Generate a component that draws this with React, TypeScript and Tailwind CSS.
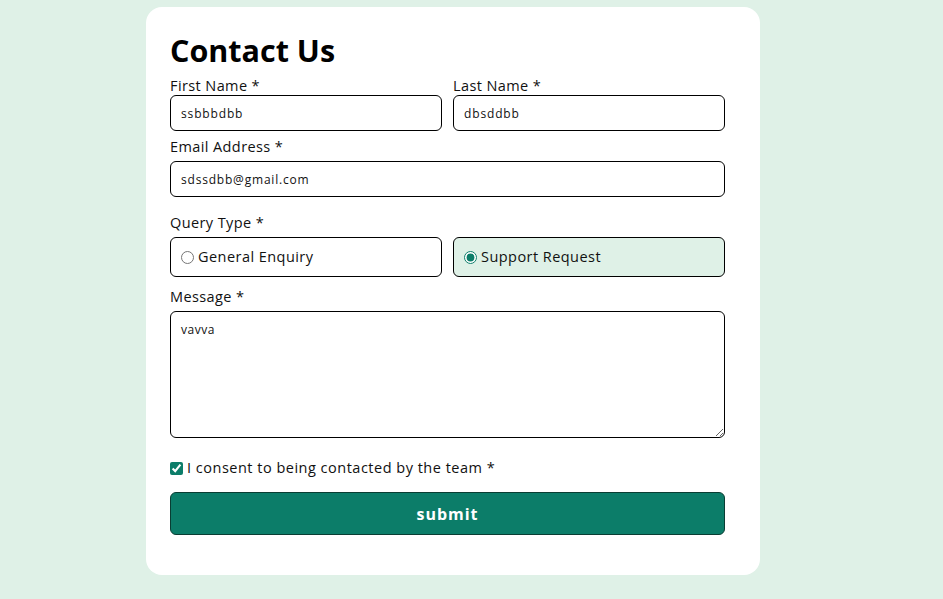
import { FC, useState } from "react";

const font = { fontFamily: "'Open Sans', 'Liberation Sans', sans-serif" };

const App: FC = () => {
  const [query, setQuery] = useState<"general" | "support">("support");
  const [consent, setConsent] = useState(true);

  return (
    <div className="min-h-[599px] bg-[#dff1e7] pt-[7px] pl-[146px] pb-6" style={font}>
      <form
        className="w-[614px] rounded-2xl bg-white pt-6 pl-6 pr-[35px] pb-10 text-[#111]"
        onSubmit={(e) => e.preventDefault()}
      >
        <h1 className="text-[30.5px] font-bold leading-[38px] text-black">Contact Us</h1>

        {/* Names */}
        <div className="mt-2 flex gap-[11px]">
          <div className="flex-1">
            <label className="block text-[14.5px] leading-[18px] tracking-[0.4px]">First Name *</label>
            <input
              defaultValue="ssbbbdbb"
              className="h-9 w-full rounded-md border border-black px-[10px] text-[12px] tracking-[0.85px] outline-none"
            />
          </div>
          <div className="flex-1">
            <label className="block text-[14.5px] leading-[18px] tracking-[0.4px]">Last Name *</label>
            <input
              defaultValue="dbsddbb"
              className="h-9 w-full rounded-md border border-black px-[10px] text-[12px] tracking-[0.85px] outline-none"
            />
          </div>
        </div>

        {/* Email */}
        <label className="mt-[7px] mb-[5px] block text-[14.5px] leading-[18px] tracking-[0.4px]">Email Address *</label>
        <input
          defaultValue="sdssdbb@gmail.com"
          className="h-9 w-full rounded-md border border-black px-[10px] text-[12px] tracking-[0.8px] outline-none"
        />

        {/* Query type */}
        <p className="mt-[17px] mb-[5px] text-[14.5px] leading-[18px] tracking-[0.4px]">Query Type *</p>
        <div className="flex gap-[11px]">
          <label
            className={`flex h-10 flex-1 items-center gap-[4px] rounded-md border border-black pl-[10px] text-[14.5px] tracking-[0.45px] ${
              query === "general" ? "bg-[#dff1e7]" : "bg-white"
            }`}
          >
            <input
              type="radio"
              name="query"
              checked={query === "general"}
              onChange={() => setQuery("general")}
              className="h-[13px] w-[13px] accent-[#0c7d69]"
            />
            General Enquiry
          </label>
          <label
            className={`flex h-10 flex-1 items-center gap-[4px] rounded-md border border-black pl-[10px] text-[14.5px] tracking-[0.45px] ${
              query === "support" ? "bg-[#dff1e7]" : "bg-white"
            }`}
          >
            <input
              type="radio"
              name="query"
              checked={query === "support"}
              onChange={() => setQuery("support")}
              className="h-[13px] w-[13px] accent-[#0c7d69]"
            />
            Support Request
          </label>
        </div>

        {/* Message */}
        <label className="mt-[11px] mb-[5px] block text-[14.5px] leading-[18px] tracking-[0.4px]">Message *</label>
        <textarea
          defaultValue="vavva"
          className="block h-[127px] w-full rounded-md border border-black px-[10px] pt-[9px] text-[12px] tracking-[0.5px] outline-none"
        />

        {/* Consent */}
        <label className="mt-[21px] flex h-[18px] items-center gap-[4px] text-[14.5px] tracking-[0.5px]">
          <input
            type="checkbox"
            checked={consent}
            onChange={() => setConsent(!consent)}
            className="h-[13px] w-[13px] accent-[#0c7d69]"
          />
          I consent to being contacted by the team *
        </label>

        <button
          type="submit"
          className="mt-[15px] h-[43px] w-full rounded-md border border-[#0a3d33] bg-[#0c7d69] text-[16px] font-bold tracking-[1px] text-white"
        >
          submit
        </button>
      </form>
    </div>
  );
};

export default App;
